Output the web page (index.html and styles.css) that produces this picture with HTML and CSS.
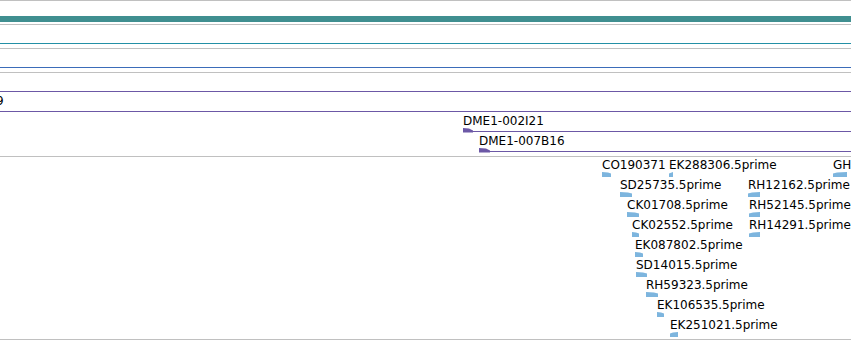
FILE: index.html
```html
<!DOCTYPE html>
<html lang="en">
<head>
    <meta charset="UTF-8">
    <title>Track view</title>
    <link rel="stylesheet" href="styles.css">
</head>
<body>

<div class="tracks">
    <div class="track track-ref">
        <div class="bar"></div>
    </div>

    <div class="track track-thin">
        <div class="span teal"></div>
    </div>

    <div class="track track-thin">
        <div class="span blue"></div>
    </div>

    <div class="track track-dme">
        <div class="feat dme" style="left:0; top:2px">
            <span class="label">&nbsp;</span>
            <svg class="glyph" width="100%" height="5"><rect x="0" y="3" width="100%" height="1"/></svg>
        </div>
        <div class="feat dme" style="left:-4px; top:22px">
            <span class="label">9</span>
            <svg class="glyph" width="100%" height="5"><rect x="0" y="3" width="100%" height="1"/></svg>
        </div>
        <div class="feat dme" style="left:463px; top:42px">
            <span class="label">DME1-002I21</span>
            <svg class="glyph" width="100%" height="5"><polygon points="0,0 6,0.5 10,2.5 10,4.5 0,4.5"/><rect x="10" y="3" width="100%" height="1"/></svg>
        </div>
        <div class="feat dme" style="left:479px; top:62px">
            <span class="label">DME1-007B16</span>
            <svg class="glyph" width="100%" height="5"><polygon points="0,0 7,0.5 11,2.5 11,4.5 0,4.5"/><rect x="11" y="3" width="100%" height="1"/></svg>
        </div>
    </div>

    <div class="track track-est">
        <!-- row 1 -->
        <div class="feat est" style="left:602px; top:2px">
            <span class="label">CO190371</span>
            <svg class="glyph" width="9" height="5"><polygon points="0,0 6,0.5 9,1.5 9,5 0,5"/></svg>
        </div>
        <div class="feat est" style="left:669px; top:2px">
            <span class="label">EK288306.5prime</span>
            <svg class="glyph" width="4" height="5"><polygon points="4,0 0,1.5 0,5 4,5"/></svg>
        </div>
        <div class="feat est" style="left:833px; top:2px">
            <span class="label">GH</span>
            <svg class="glyph" width="14" height="5"><polygon points="14,0 4,0.5 0,1.5 0,5 14,5"/></svg>
        </div>

        <!-- row 2 -->
        <div class="feat est" style="left:620px; top:22px">
            <span class="label">SD25735.5prime</span>
            <svg class="glyph" width="12" height="5"><polygon points="0,0 8,0.5 12,1.5 12,5 0,5"/></svg>
        </div>
        <div class="feat est" style="left:748px; top:22px">
            <span class="label">RH12162.5prime</span>
            <svg class="glyph" width="12" height="5"><polygon points="12,0 4,0.5 0,1.5 0,5 12,5"/></svg>
        </div>

        <!-- row 3 -->
        <div class="feat est" style="left:627px; top:42px">
            <span class="label">CK01708.5prime</span>
            <svg class="glyph" width="12" height="5"><polygon points="0,0 8,0.5 12,1.5 12,5 0,5"/></svg>
        </div>
        <div class="feat est" style="left:749px; top:42px">
            <span class="label">RH52145.5prime</span>
            <svg class="glyph" width="11" height="5"><polygon points="11,0 4,0.5 0,1.5 0,5 11,5"/></svg>
        </div>

        <!-- row 4 -->
        <div class="feat est" style="left:632px; top:62px">
            <span class="label">CK02552.5prime</span>
            <svg class="glyph" width="7" height="5"><polygon points="0,0 4,0.5 7,1.5 7,5 0,5"/></svg>
        </div>
        <div class="feat est" style="left:749px; top:62px">
            <span class="label">RH14291.5prime</span>
            <svg class="glyph" width="11" height="5"><polygon points="11,0 4,0.5 0,1.5 0,5 11,5"/></svg>
        </div>

        <!-- row 5..9 -->
        <div class="feat est" style="left:635px; top:82px">
            <span class="label">EK087802.5prime</span>
            <svg class="glyph" width="8" height="5"><polygon points="0,0 5,0.5 8,1.5 8,5 0,5"/></svg>
        </div>
        <div class="feat est" style="left:636px; top:102px">
            <span class="label">SD14015.5prime</span>
            <svg class="glyph" width="11" height="5"><polygon points="0,0 7,0.5 11,1.5 11,5 0,5"/></svg>
        </div>
        <div class="feat est" style="left:646px; top:122px">
            <span class="label">RH59323.5prime</span>
            <svg class="glyph" width="12" height="5"><polygon points="0,0 8,0.5 12,1.5 12,5 0,5"/></svg>
        </div>
        <div class="feat est" style="left:657px; top:142px">
            <span class="label">EK106535.5prime</span>
            <svg class="glyph" width="7" height="5"><polygon points="0,0 4,0.5 7,1.5 7,5 0,5"/></svg>
        </div>
        <div class="feat est" style="left:670px; top:162px">
            <span class="label">EK251021.5prime</span>
            <svg class="glyph" width="8" height="5"><polygon points="8,0 3,0.5 0,1.5 0,5 8,5"/></svg>
        </div>
    </div>
</div>

</body>
</html>
```

FILE: styles.css
```css
body {
    margin: 0;
    font-family: 'DejaVu Sans', sans-serif;
    background-color: #fff;
    overflow: hidden;
}
.tracks {
    width: 851px;
}
.track {
    position: relative;
    border-top: 1px solid #c0c0c0;
}
.track-ref {
    height: 24px;
    padding-top: 15px;
    box-sizing: border-box;
}
.bar {
    height: 6px;
    background-color: #408f90;
}
.track-thin {
    height: 24px;
    padding-top: 18px;
    box-sizing: border-box;
}
.span {
    height: 1px;
}
.span.teal {
    background-color: #2390a6;
}
.span.blue {
    background-color: #3b6cb9;
}
.track-dme {
    height: 83px;
}
.track-est {
    height: 182px;
    border-bottom: 1px solid #c0c0c0;
}
.feat {
    position: absolute;
    right: 0;
}
.feat.est {
    right: auto;
}
.label {
    display: block;
    font-size: 12px;
    line-height: 13px;
    color: #000;
    white-space: nowrap;
}
.glyph {
    display: block;
}
.dme .glyph {
    fill: #6c58a6;
}
.est .glyph {
    fill: #7db5de;
}
```
